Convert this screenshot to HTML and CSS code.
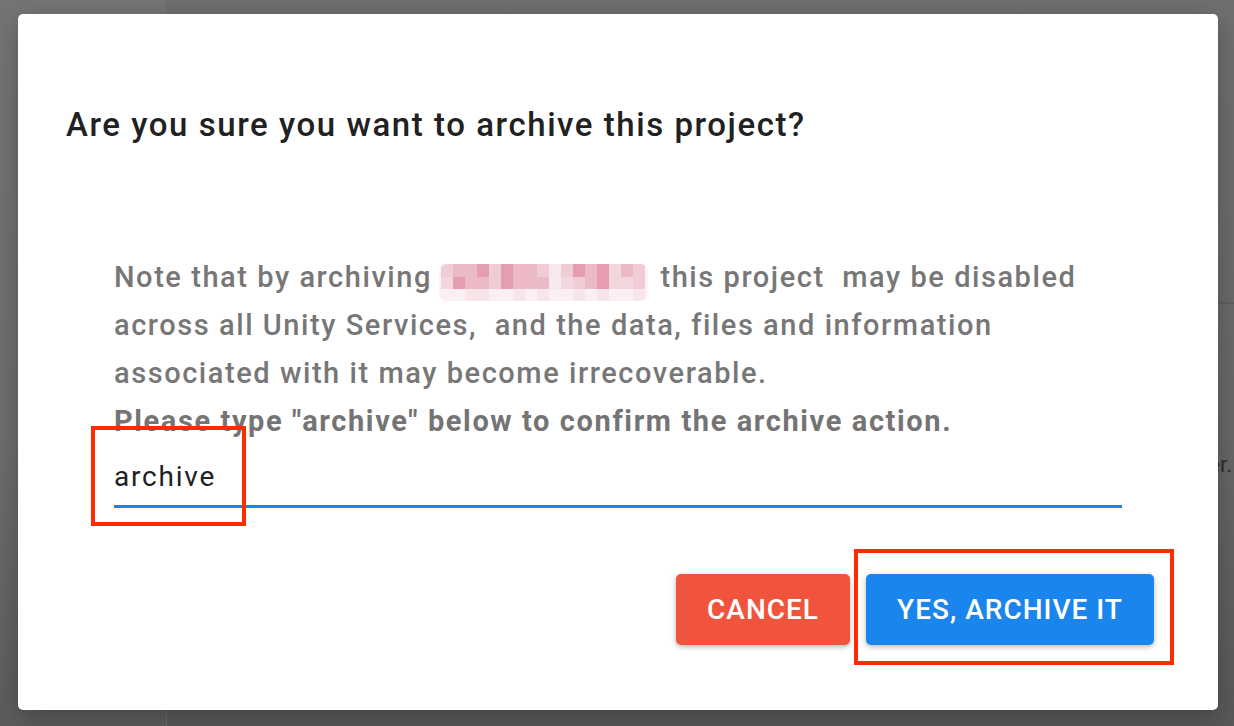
FILE: index.html
```html
<!DOCTYPE html>
<html>
<head>
<meta charset="utf-8">
<link rel="stylesheet" href="styles.css">
</head>
<body>
<div class="backdrop">
  <div class="side"></div>
  <div class="main">
    <div class="main-top"></div>
    <div class="main-text">er.</div>
  </div>
</div>
<div class="overlay">
  <div class="dialog">
    <h2 class="title">Are you sure you want to archive this project?</h2>
    <div class="body">
      <p class="note">Note that by archiving <span class="redact"><span class="grid"><span class="px r1a"></span><span class="px r1b"></span><span class="px r1b"></span><span class="px r1c"></span><span class="px r1a"></span><span class="px r1c"></span><span class="px r1b"></span><span class="px r1b"></span><span class="px r1a"></span><span class="px r1d"></span><span class="px r1a"></span><span class="px r1c"></span><span class="px r1b"></span><span class="px r1c"></span><span class="px r1e"></span><span class="px r1b"></span><span class="px r1a"></span><span class="px r1e"></span><span class="px r1c"></span><span class="px r1b"></span><span class="px r1b"></span><span class="px r1a"></span><span class="px r1c"></span><span class="px r1b"></span><span class="px r1b"></span><span class="px r1b"></span><span class="px r1d"></span><span class="px r1e"></span><span class="px r1a"></span><span class="px r1b"></span><span class="px r1c"></span><span class="px r1e"></span><span class="px r1e"></span><span class="px r1a"></span><span class="px r3"></span><span class="px r3"></span><span class="px r3b"></span><span class="px r3b"></span><span class="px r3"></span><span class="px r3"></span><span class="px r3b"></span><span class="px r3"></span><span class="px r3b"></span><span class="px r3"></span><span class="px r3"></span><span class="px r3b"></span><span class="px r3"></span><span class="px r3b"></span><span class="px r3"></span><span class="px r3"></span><span class="px r3b"></span></span></span> this project&nbsp; may be disabled across all Unity Services,&nbsp; and the data, files and information associated with it may become irrecoverable.<br><strong>Please type "archive" below to confirm the archive action.</strong></p>
      <div class="field">
        <input class="input" type="text" value="archive">
      </div>
    </div>
    <div class="actions">
      <button class="btn btn-cancel">CANCEL</button>
      <button class="btn btn-confirm">YES, ARCHIVE IT</button>
    </div>
    <div class="mark mark-input"></div>
    <div class="mark mark-button"></div>
  </div>
</div>
</body>
</html>
```

FILE: styles.css
```css
* { box-sizing: border-box; }
html, body { margin: 0; padding: 0; }
body {
  width: 1234px;
  height: 726px;
  overflow: hidden;
  font-family: Roboto, "Noto Sans", sans-serif;
  position: relative;
  background: linear-gradient(180deg, #6f6f6f 0%, #676767 60%, #585858 100%);
}
.backdrop {
  display: flex;
  height: 726px;
}
.side {
  width: 167px;
  border-right: 1px solid #6a6a6a;
  background: linear-gradient(180deg, #737474 0%, #6c6d6d 60%, #5b5c5b 100%);
}
.main { flex: 1; position: relative; }
.main-top {
  height: 304px;
  border-bottom: 2px solid #5e5e5e;
}
.main-text {
  text-align: right;
  padding-top: 148px;
  padding-right: 2px;
  font-size: 22px;
  color: #2e2e2e;
}
.overlay {
  position: absolute;
  left: 0; top: 0;
  width: 1234px;
  height: 726px;
  display: flex;
  align-items: flex-start;
  justify-content: center;
  padding-top: 14px;
}
.dialog {
  position: relative;
  width: 1200px;
  height: 696px;
  margin-left: 2px;
  background: #fff;
  border-radius: 5px;
  box-shadow: 0 8px 24px rgba(0,0,0,0.25);
  padding: 0 64px 0 48px;
  display: flex;
  flex-direction: column;
}
.title {
  margin: 91px 0 0 0;
  font-size: 33px;
  font-weight: 500;
  line-height: 40px;
  color: #212121;
  letter-spacing: 1.55px;
}
.body {
  margin-top: 108px;
  padding: 0 32px 0 48px;
}
.note {
  margin: 0;
  font-size: 29px;
  font-weight: 500;
  line-height: 48px;
  color: #777777;
  letter-spacing: 1.55px;
}
.note strong { font-weight: 700; color: #747474; letter-spacing: 1.6px; }
.redact {
  display: inline-block;
  overflow: hidden;
  vertical-align: -14px;
  margin: 0 4px 0 -2px;
  border-radius: 8px;
  background: #fbf1f4;
  padding: 0 3px 0 2px;
}
.grid {
  display: grid;
  grid-template-columns: repeat(17, 12px);
  grid-template-rows: 13px 12px 12px;
}
.px { display: block; }
.r1a { background: #f0cdd6; }
.r1b { background: #ecbac7; }
.r1c { background: #e59db1; }
.r1d { background: #f6e8ec; }
.r1e { background: #f3d7df; }
.r3 { background: #faf0f3; }
.r3b { background: #f7e5ea; }
.field {
  margin-top: 12px;
}
.input {
  display: block;
  width: 100%;
  border: none;
  border-bottom: 3px solid #1a84e8;
  outline: none;
  padding: 0 0 8px 0;
  font-family: Roboto, "Noto Sans", sans-serif;
  font-size: 28px;
  letter-spacing: 1.8px;
  line-height: 40px;
  color: #212121;
  background: transparent;
}
.actions {
  margin-top: 66px;
  display: flex;
  justify-content: flex-end;
  gap: 16px;
}
.btn {
  height: 71px;
  border: none;
  border-radius: 5px;
  color: #fff;
  font-family: Roboto, "Noto Sans", sans-serif;
  font-size: 28px;
  font-weight: 500;
  letter-spacing: 1px;
  box-shadow: 0 2px 4px rgba(0,0,0,0.2), 0 1px 8px rgba(0,0,0,0.1);
}
.btn-cancel { width: 174px; background: #f0543d; }
.btn-confirm { width: 288px; background: #1a85ec; }
.mark {
  position: absolute;
  border: 4px solid #ff2a00;
}
.mark-input { left: 73px; top: 412px; width: 155px; height: 100px; }
.mark-button { left: 836px; top: 535px; width: 320px; height: 116px; }
```
